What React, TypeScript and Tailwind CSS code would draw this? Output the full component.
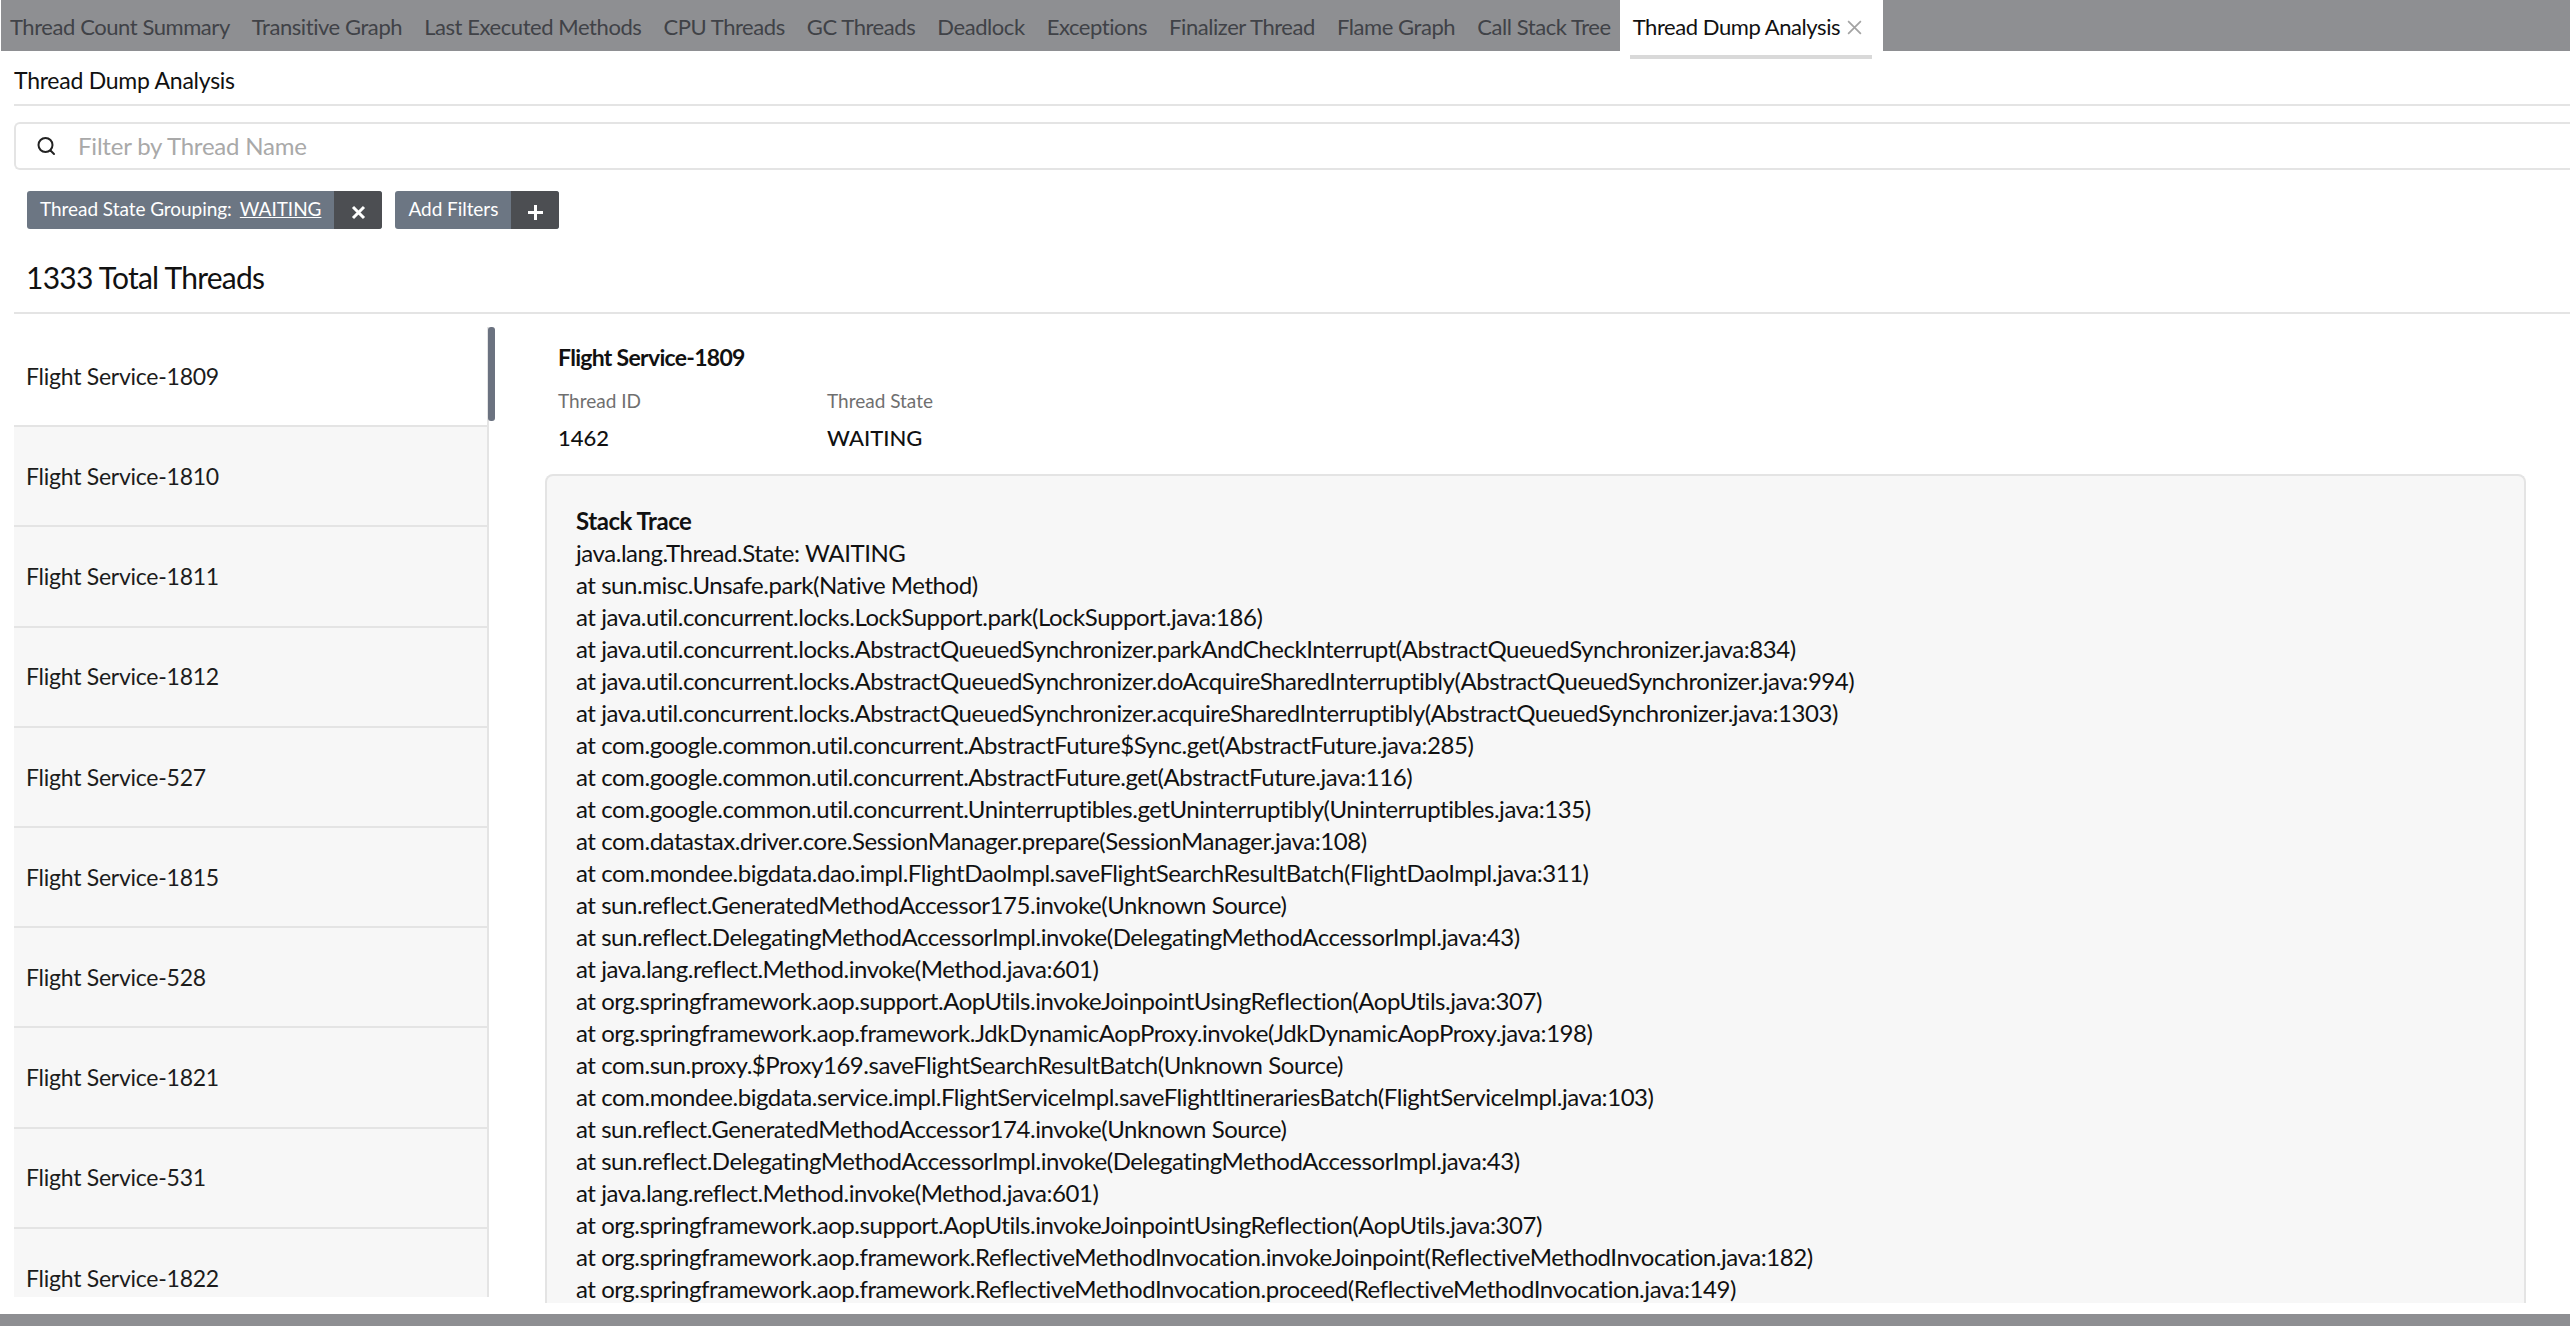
const tabs = [
  "Thread Count Summary",
  "Transitive Graph",
  "Last Executed Methods",
  "CPU Threads",
  "GC Threads",
  "Deadlock",
  "Exceptions",
  "Finalizer Thread",
  "Flame Graph",
  "Call Stack Tree",
];

const threads = ["1809", "1810", "1811", "1812", "527", "1815", "528", "1821", "531", "1822"];

const trace = [
  "java.lang.Thread.State: WAITING",
  "at sun.misc.Unsafe.park(Native Method)",
  "at java.util.concurrent.locks.LockSupport.park(LockSupport.java:186)",
  "at java.util.concurrent.locks.AbstractQueuedSynchronizer.parkAndCheckInterrupt(AbstractQueuedSynchronizer.java:834)",
  "at java.util.concurrent.locks.AbstractQueuedSynchronizer.doAcquireSharedInterruptibly(AbstractQueuedSynchronizer.java:994)",
  "at java.util.concurrent.locks.AbstractQueuedSynchronizer.acquireSharedInterruptibly(AbstractQueuedSynchronizer.java:1303)",
  "at com.google.common.util.concurrent.AbstractFuture$Sync.get(AbstractFuture.java:285)",
  "at com.google.common.util.concurrent.AbstractFuture.get(AbstractFuture.java:116)",
  "at com.google.common.util.concurrent.Uninterruptibles.getUninterruptibly(Uninterruptibles.java:135)",
  "at com.datastax.driver.core.SessionManager.prepare(SessionManager.java:108)",
  "at com.mondee.bigdata.dao.impl.FlightDaoImpl.saveFlightSearchResultBatch(FlightDaoImpl.java:311)",
  "at sun.reflect.GeneratedMethodAccessor175.invoke(Unknown Source)",
  "at sun.reflect.DelegatingMethodAccessorImpl.invoke(DelegatingMethodAccessorImpl.java:43)",
  "at java.lang.reflect.Method.invoke(Method.java:601)",
  "at org.springframework.aop.support.AopUtils.invokeJoinpointUsingReflection(AopUtils.java:307)",
  "at org.springframework.aop.framework.JdkDynamicAopProxy.invoke(JdkDynamicAopProxy.java:198)",
  "at com.sun.proxy.$Proxy169.saveFlightSearchResultBatch(Unknown Source)",
  "at com.mondee.bigdata.service.impl.FlightServiceImpl.saveFlightItinerariesBatch(FlightServiceImpl.java:103)",
  "at sun.reflect.GeneratedMethodAccessor174.invoke(Unknown Source)",
  "at sun.reflect.DelegatingMethodAccessorImpl.invoke(DelegatingMethodAccessorImpl.java:43)",
  "at java.lang.reflect.Method.invoke(Method.java:601)",
  "at org.springframework.aop.support.AopUtils.invokeJoinpointUsingReflection(AopUtils.java:307)",
  "at org.springframework.aop.framework.ReflectiveMethodInvocation.invokeJoinpoint(ReflectiveMethodInvocation.java:182)",
  "at org.springframework.aop.framework.ReflectiveMethodInvocation.proceed(ReflectiveMethodInvocation.java:149)",
];

function SearchIcon() {
  return (
    <svg width="20" height="20" viewBox="0 0 20 20" fill="none" stroke="#222" strokeWidth="2" strokeLinecap="round">
      <circle cx="9.5" cy="9" r="7" />
      <path d="M14.5 14.5l3.5 3.5" />
    </svg>
  );
}

function Chip({ label, value, icon }: { label: string; value?: string; icon: "x" | "plus" }) {
  return (
    <div className="flex h-[38px] overflow-hidden rounded-[3px] bg-[#6c7683] text-[19px] tracking-[-0.05px] text-white">
      <div className="flex items-center pb-[2px] pl-[13px] pr-[13px]">
        <span>{label}</span>
        {value && <span className="ml-[8px] underline">{value}</span>}
      </div>
      <div className="flex w-[48px] items-center justify-center bg-[#4c4e52] pt-[4px]">
        <svg width="15" height="15" viewBox="0 0 15 15" stroke="#fff" strokeWidth="3">
          {icon === "x" ? <path d="M2 2l11 11M13 2L2 13" /> : <path d="M7.5 0v15M0 7.5h15" />}
        </svg>
      </div>
    </div>
  );
}

export default function App() {
  return (
    <div className="flex h-[1326px] w-[2570px] flex-col overflow-hidden bg-white font-['Lato',sans-serif] text-[#1c1c1c]">
      <div className="ml-[1px] flex h-[51px] shrink-0 bg-[#8e8f92] pl-[9px] text-[22px] tracking-[-0.43px] text-[#404247]">
        <div className="flex items-center gap-[22px] pt-[1px]">
          {tabs.map((t) => (
            <span key={t} className="whitespace-nowrap">{t}</span>
          ))}
        </div>
        <div className="relative ml-[9px] flex h-[51px] w-[263px] items-center bg-white pl-[13px] pt-[1px] text-[#111]">
          <span className="whitespace-nowrap">Thread Dump Analysis</span>
          <svg className="ml-[6px] mt-[3px]" width="17" height="17" viewBox="0 0 16 16" stroke="#a3a3a3" strokeWidth="1.6">
            <path d="M2 2l12 12M14 2L2 14" />
          </svg>
          <div className="absolute left-[10px] top-[55px] h-[4px] w-[242px] bg-[#d9d9d9]" />
        </div>
      </div>

      <div className="flex min-h-0 flex-1 flex-col pl-[14px]">
        <div className="flex h-[55px] shrink-0 items-center border-b-2 border-[#e4e4e4] pt-[6px] text-[23px] tracking-[-0.25px] text-[#111]">
          Thread Dump Analysis
        </div>
        <div className="mt-[16px] flex h-[48px] shrink-0 items-center rounded-l-[6px] border-2 border-r-0 border-[#e4e4e4] pl-[20px] text-[24px] tracking-[-0.2px] text-[#a9a9a9]">
          <SearchIcon />
          <span className="ml-[22px]">Filter by Thread Name</span>
        </div>
        <div className="ml-[13px] mt-[21px] flex shrink-0 gap-[13px]">
          <Chip label="Thread State Grouping:" value="WAITING" icon="x" />
          <Chip label="Add Filters" icon="plus" />
        </div>
        <div className="flex h-[85px] shrink-0 items-center border-b-2 border-[#e4e4e4] pl-[12px] pt-[14px] text-[30px] tracking-[-0.75px] text-[#111]">
          1333 Total Threads
        </div>

        <div className="mt-[13px] flex min-h-0 flex-1">
          <div className="relative h-[970px] w-[475px] shrink-0 overflow-hidden border-r-2 border-[#e4e4e4] bg-[#f7f7f7] text-[23px] tracking-[-0.25px] text-[#1c1c1c]">
            {threads.map((n, i) => (
              <div
                key={n}
                className={
                  i === 0
                    ? "flex h-[100.2px] items-center border-b-2 border-[#e4e4e4] bg-white pl-[12px]"
                    : "flex h-[100.2px] items-center border-b-2 border-[#e4e4e4] pl-[12px]"
                }
              >
                Flight Service-{n}
              </div>
            ))}
          </div>
          <div className="relative -ml-[1px] h-[94px] w-[7px] shrink-0 rounded-[3px] bg-[#6b7280]" />

          <div className="ml-[50px] flex min-w-0 flex-1 flex-col">
            <div className="pl-[13px]">
              <div className="mt-[16px] text-[23px] font-bold leading-[28px] tracking-[-0.7px] text-[#111]">Flight Service-1809</div>
              <div className="mt-[18px] flex text-[19px] leading-[24px] text-[#6f6f6f]">
                <div className="w-[269px]">Thread ID</div>
                <div>Thread State</div>
              </div>
              <div className="mt-[12px] flex text-[22px] font-medium leading-[26px] text-[#111]">
                <div className="w-[269px]">1462</div>
                <div>WAITING</div>
              </div>
            </div>
            <div className="mt-[23px] h-[829px] w-[1981px] shrink-0 overflow-hidden rounded-t-[8px] border-2 border-b-0 border-[#e4e4e4] bg-[#f7f7f7] pl-[29px] pt-[29px] text-[24px] leading-[32px] tracking-[-0.45px] text-[#111]">
              <div className="font-bold">Stack Trace</div>
              {trace.map((l, i) => (
                <div key={i} className="whitespace-nowrap">{l}</div>
              ))}
            </div>
          </div>
        </div>
      </div>
      <div className="h-[12px] shrink-0 bg-[#8e8f92]" />
    </div>
  );
}
